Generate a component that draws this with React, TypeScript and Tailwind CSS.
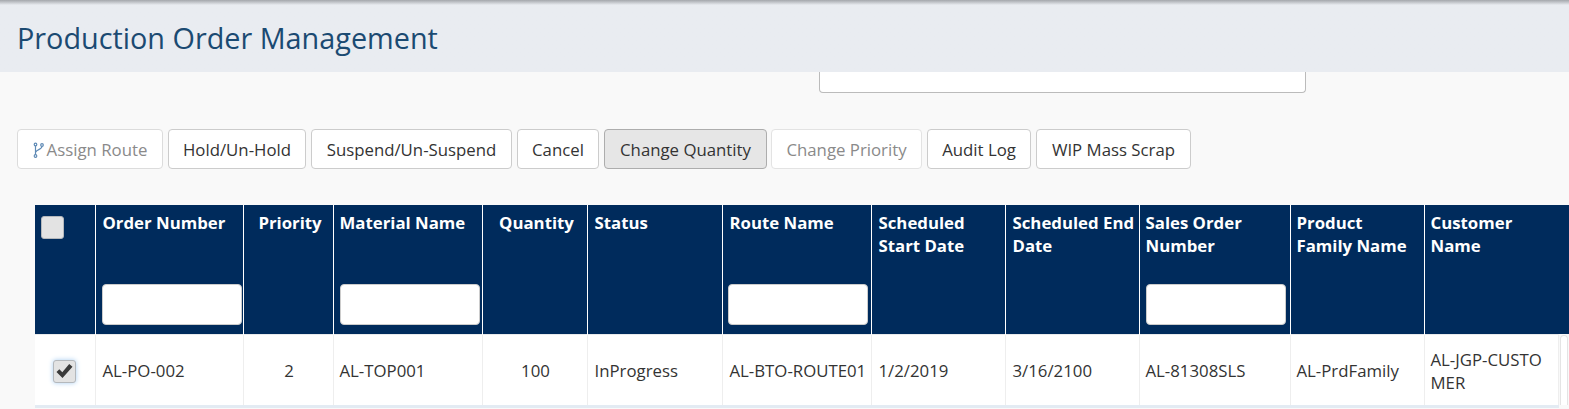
import React from 'react';

const columns = [
  { label: 'Order Number', width: 'w-[148px]', pad: 'pl-[7px]', filter: 'left-[6px]', value: 'AL-PO-002' },
  { label: 'Priority', width: 'w-[90px]', center: true, value: '2' },
  { label: 'Material Name', width: 'w-[149px]', pad: 'pl-[6px]', filter: 'left-[6px]', value: 'AL-TOP001' },
  { label: 'Quantity', width: 'w-[105px]', center: true, value: '100' },
  { label: 'Status', width: 'w-[135px]', pad: 'pl-[7px]', value: 'InProgress' },
  { label: 'Route Name', width: 'w-[149px]', pad: 'pl-[7px]', filter: 'left-[5px]', value: 'AL-BTO-ROUTE01' },
  { label: 'Scheduled Start Date', width: 'w-[134px]', pad: 'pl-[7px]', value: '1/2/2019' },
  { label: 'Scheduled End Date', width: 'w-[134px]', pad: 'pl-[7px]', value: '3/16/2100' },
  { label: 'Sales Order Number', width: 'w-[151px]', pad: 'pl-[6px]', filter: 'left-[6px]', value: 'AL-81308SLS' },
  { label: 'Product Family Name', width: 'w-[134px]', pad: 'pl-[6px]', value: 'AL-PrdFamily' },
  { label: 'Customer Name', width: 'w-[134px]', pad: 'pl-[6px]', value: 'AL-JGP-CUSTOMER' },
];

const buttons = [
  { label: 'Hold/Un-Hold', width: 'w-[138px]' },
  { label: 'Suspend/Un-Suspend', width: 'w-[201px]' },
  { label: 'Cancel', width: 'w-[82px]' },
  { label: 'Change Quantity', width: 'w-[163px] -mr-[1px]', active: true },
  { label: 'Change Priority', width: 'w-[151px]', disabled: true },
  { label: 'Audit Log', width: 'w-[104px]' },
  { label: 'WIP Mass Scrap', width: 'w-[155px]' },
];

const RouteIcon = () => (
  <svg width="11" height="17" viewBox="0 0 11 17" fill="none" stroke="#5f8ab5" strokeWidth="1.2" className="mr-[3px]">
    <circle cx="2.5" cy="2.5" r="1.3" />
    <circle cx="9" cy="3" r="1.3" />
    <circle cx="2.5" cy="14" r="1.3" />
    <path d="M2.5 3.8V12.7M9 4.3C9 7.5 3.5 7.5 2.8 10" />
  </svg>
);

const CheckBox = ({ checked }: { checked?: boolean }) => (
  <span
    className={`flex h-[23px] w-[23px] items-center justify-center rounded-[3px] border border-[#b4b8bc] bg-[#e3e3e3] ${
      checked ? 'shadow-[0_0_5px_#a9cdf0]' : ''
    }`}
  >
    {checked && (
      <svg width="17" height="16" viewBox="0 0 17 16" fill="#3a3a3a">
        <path d="M0.5 9L3.3 6.2L6.3 9.2L13.2 1L16.5 3.8L6.5 15Z" />
      </svg>
    )}
  </span>
);

export default function App() {
  return (
    <div className="h-[409px] w-[1569px] overflow-hidden bg-[#f9f9f9] font-['Open_Sans','Noto_Sans',sans-serif]">
      <div className="h-[72px] bg-gradient-to-b from-[#a4a7ac] from-0% to-[#e9ecf1] to-[7%] px-[17px] pt-[19px]">
        <h1 className="text-[28.8px] leading-[38px] font-normal text-[#1b4a72]">Production Order Management</h1>
      </div>

      <div className="ml-[819px] h-[21px] w-[487px] rounded-b-[4px] border border-t-0 border-[#bbbbbb] bg-white" />

      <div className="mt-[36px] ml-[17px] flex gap-[5px]">
        <button className="flex h-[40px] w-[146px] items-center justify-center rounded-[4px] border border-[#dcdcdc] bg-white pt-[2px] text-[16.8px] text-[#8a8a8a]">
          <RouteIcon />
          Assign Route
        </button>
        {buttons.map((b) => (
          <button
            key={b.label}
            className={`h-[40px] rounded-[4px] border pt-[2px] text-[16.8px] ${b.width} ${
              b.active
                ? 'border-[#adadad] bg-[#e6e6e6] text-[#333333]'
                : b.disabled
                  ? 'border-[#e3e3e3] bg-white text-[#8a8a8a]'
                  : 'border-[#cccccc] bg-white text-[#333333]'
            }`}
          >
            {b.label}
          </button>
        ))}
      </div>

      <table className="mt-[36px] ml-[35px] table-fixed border-collapse text-[16.8px]">
        <thead>
          <tr className="h-[129px] bg-[#002b5c] align-top">
            <th className="w-[60px] border-r border-white p-0 pt-[11px] pl-[6px]">
              <CheckBox />
            </th>
            {columns.map((c, i) => (
              <th
                key={c.label}
                className={`relative pt-[6px] text-[16.8px] leading-[23px] font-bold text-white ${c.width} ${
                  c.center ? 'pr-[4px] pl-[8px] text-center' : `pr-[2px] text-left ${c.pad}`
                } ${i < columns.length - 1 ? 'border-r border-white' : ''}`}
              >
                {c.label}
                {c.filter && (
                  <input
                    aria-label={c.label}
                    className={`absolute top-[79px] h-[41px] w-[140px] rounded-[4px] border border-[#cccccc] bg-white ${c.filter}`}
                  />
                )}
              </th>
            ))}
            <th className="w-[11px] p-0" />
          </tr>
        </thead>
        <tbody>
          <tr className="h-[72px] bg-white text-[#333333]">
            <td className="border-t border-r border-b-[3px] border-t-[#e8eaec] border-r-[#eeeeee] border-b-[#e3ebf3] p-0 pt-[3px]">
              <div className="flex justify-center">
                <CheckBox checked />
              </div>
            </td>
            {columns.map((c, i) => (
              <td
                key={c.label}
                className={`border-t border-r border-b-[3px] border-t-[#e8eaec] border-r-[#eeeeee] border-b-[#e3ebf3] pt-[2px] leading-[23px] break-all ${
                  c.center ? 'pr-[5px] pl-[7px] text-center' : `text-left ${c.pad}`
                } ${i === columns.length - 1 ? 'pr-[10px]' : c.center ? '' : 'pr-[2px]'}`}
              >
                {c.value}
              </td>
            ))}
            <td className="bg-[#f9f9f9] p-0 pt-[1px] align-top">
              <div className="ml-[1px] h-[70px] w-[8px] rounded-t-[4px] border border-b-0 border-[#e4e4e4] bg-white" />
            </td>
          </tr>
        </tbody>
      </table>
    </div>
  );
}
